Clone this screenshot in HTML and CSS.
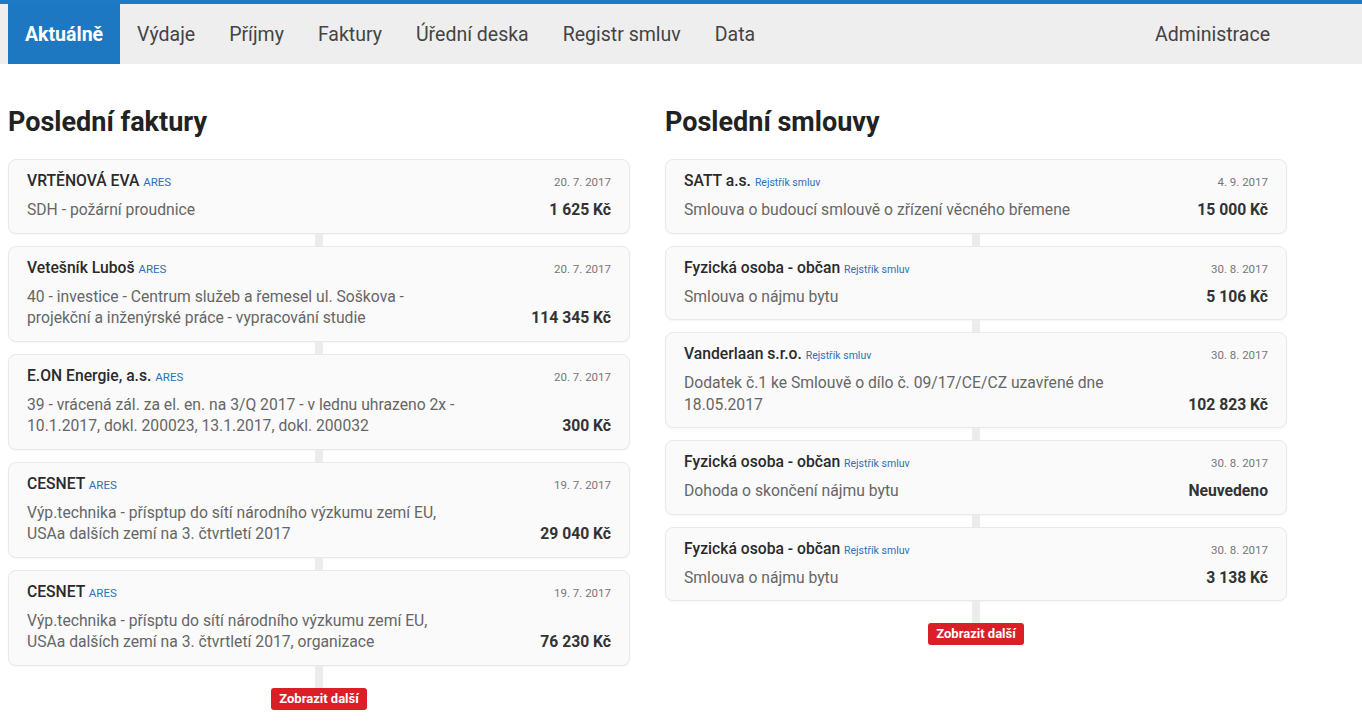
FILE: index.html
```html
<!DOCTYPE html>
<html lang="cs">
<head>
<meta charset="utf-8">
<title>Aktuálně</title>
<link rel="stylesheet" href="styles.css">
</head>
<body>
<header class="topbar">
  <nav class="wrap nav">
    <a class="nav-item active" href="#">Aktuálně</a>
    <a class="nav-item" href="#">Výdaje</a>
    <a class="nav-item" href="#">Příjmy</a>
    <a class="nav-item" href="#">Faktury</a>
    <a class="nav-item" href="#">Úřední deska</a>
    <a class="nav-item" href="#">Registr smluv</a>
    <a class="nav-item" href="#">Data</a>
    <a class="nav-item nav-right" href="#">Administrace</a>
  </nav>
</header>

<main class="wrap columns">
  <section class="col">
    <h1 class="title">Poslední faktury</h1>
    <div class="list">
      <div class="card">
        <div class="card-head"><span class="name">VRTĚNOVÁ EVA <a class="tag ares" href="#">ARES</a></span><span class="date">20. 7. 2017</span></div>
        <div class="card-body"><span class="desc">SDH - požární proudnice</span><span class="amount">1 625 Kč</span></div>
      </div>
      <div class="connector"></div>
      <div class="card">
        <div class="card-head"><span class="name">Vetešník Luboš <a class="tag ares" href="#">ARES</a></span><span class="date">20. 7. 2017</span></div>
        <div class="card-body"><span class="desc">40 - investice - Centrum služeb a řemesel ul. Soškova -<br>projekční a inženýrské práce - vypracování studie</span><span class="amount">114 345 Kč</span></div>
      </div>
      <div class="connector"></div>
      <div class="card">
        <div class="card-head"><span class="name">E.ON Energie, a.s. <a class="tag ares" href="#">ARES</a></span><span class="date">20. 7. 2017</span></div>
        <div class="card-body"><span class="desc">39 - vrácená zál. za el. en. na 3/Q 2017 - v lednu uhrazeno 2x -<br>10.1.2017, dokl. 200023, 13.1.2017, dokl. 200032</span><span class="amount">300 Kč</span></div>
      </div>
      <div class="connector"></div>
      <div class="card">
        <div class="card-head"><span class="name">CESNET <a class="tag ares" href="#">ARES</a></span><span class="date">19. 7. 2017</span></div>
        <div class="card-body"><span class="desc">Výp.technika - přísptup do sítí národního výzkumu zemí EU,<br>USAa dalších zemí na 3. čtvrtletí 2017</span><span class="amount">29 040 Kč</span></div>
      </div>
      <div class="connector"></div>
      <div class="card">
        <div class="card-head"><span class="name">CESNET <a class="tag ares" href="#">ARES</a></span><span class="date">19. 7. 2017</span></div>
        <div class="card-body"><span class="desc">Výp.technika - přísptu do sítí národního výzkumu zemí EU,<br>USAa dalších zemí na 3. čtvrtletí 2017, organizace</span><span class="amount">76 230 Kč</span></div>
      </div>
      <div class="connector long"></div>
      <a class="more" href="#">Zobrazit další</a>
    </div>
  </section>

  <section class="col">
    <h1 class="title">Poslední smlouvy</h1>
    <div class="list">
      <div class="card">
        <div class="card-head"><span class="name">SATT a.s. <a class="tag reg" href="#">Rejstřík smluv</a></span><span class="date">4. 9. 2017</span></div>
        <div class="card-body"><span class="desc">Smlouva o budoucí smlouvě o zřízení věcného břemene</span><span class="amount">15 000 Kč</span></div>
      </div>
      <div class="connector"></div>
      <div class="card">
        <div class="card-head"><span class="name">Fyzická osoba - občan <a class="tag reg" href="#">Rejstřík smluv</a></span><span class="date">30. 8. 2017</span></div>
        <div class="card-body"><span class="desc">Smlouva o nájmu bytu</span><span class="amount">5 106 Kč</span></div>
      </div>
      <div class="connector"></div>
      <div class="card">
        <div class="card-head"><span class="name">Vanderlaan s.r.o. <a class="tag reg" href="#">Rejstřík smluv</a></span><span class="date">30. 8. 2017</span></div>
        <div class="card-body"><span class="desc">Dodatek č.1 ke Smlouvě o dílo č. 09/17/CE/CZ uzavřené dne<br>18.05.2017</span><span class="amount">102 823 Kč</span></div>
      </div>
      <div class="connector"></div>
      <div class="card">
        <div class="card-head"><span class="name">Fyzická osoba - občan <a class="tag reg" href="#">Rejstřík smluv</a></span><span class="date">30. 8. 2017</span></div>
        <div class="card-body"><span class="desc">Dohoda o skončení nájmu bytu</span><span class="amount">Neuvedeno</span></div>
      </div>
      <div class="connector"></div>
      <div class="card">
        <div class="card-head"><span class="name">Fyzická osoba - občan <a class="tag reg" href="#">Rejstřík smluv</a></span><span class="date">30. 8. 2017</span></div>
        <div class="card-body"><span class="desc">Smlouva o nájmu bytu</span><span class="amount">3 138 Kč</span></div>
      </div>
      <div class="connector long"></div>
      <a class="more" href="#">Zobrazit další</a>
    </div>
  </section>
</main>
</body>
</html>
```

FILE: styles.css
```css
* { box-sizing: border-box; }

body {
  margin: 0;
  background: #ffffff;
  font-family: Roboto, "Liberation Sans", Arial, sans-serif;
  color: #333333;
}

a { text-decoration: none; }

.wrap {
  width: 1279px;
  margin-left: 8px;
}

.topbar {
  border-top: 4px solid #1f7ac6;
  background: #eeeeee;
}

.nav {
  display: flex;
  height: 60px;
}

.nav-item {
  display: flex;
  align-items: center;
  padding: 0 17px;
  font-size: 19.5px;
  color: #444444;
}

.nav-item.active {
  background: #1e77c1;
  color: #ffffff;
  font-weight: 700;
}

.nav-right { margin-left: auto; }

.columns {
  display: grid;
  grid-template-columns: 622px 622px;
  column-gap: 35px;
  padding-top: 42px;
}

.title {
  margin: 0 0 21px;
  font-size: 27px;
  line-height: 32px;
  font-weight: 700;
  color: #222222;
}

.list {
  display: flex;
  flex-direction: column;
  align-items: stretch;
}

.card {
  background: #fafafa;
  border: 1px solid #e9e9e9;
  border-radius: 8px;
  box-shadow: 0 1px 2px rgba(0,0,0,0.04);
  padding: 10px 18px 12px 18px;
}

.card-head {
  display: flex;
  justify-content: space-between;
  align-items: baseline;
  height: 22px;
  line-height: 22px;
  margin-bottom: 7px;
}

.name {
  font-size: 15.7px;
  font-weight: 500;
  color: #2a2a2a;
}

.tag {
  font-size: 11.5px;
  font-weight: 400;
  color: #2f6fb7;
}

.tag.reg { font-size: 10.5px; }

.date {
  font-size: 11.5px;
  color: #777777;
}

.card-body {
  display: flex;
  justify-content: space-between;
  align-items: flex-end;
  line-height: 21.5px;
}

.desc {
  font-size: 15.7px;
  color: #666666;
}

.amount {
  font-size: 15.7px;
  font-weight: 700;
  color: #333333;
  white-space: nowrap;
}

.connector {
  align-self: center;
  width: 8px;
  height: 12px;
  background: #ececec;
}

.connector.long { height: 22px; }

.more {
  align-self: center;
  background: #da1f26;
  color: #ffffff;
  font-size: 13px;
  font-weight: 700;
  line-height: 22px;
  height: 22px;
  padding: 0 8px;
  border-radius: 3px;
}
```
